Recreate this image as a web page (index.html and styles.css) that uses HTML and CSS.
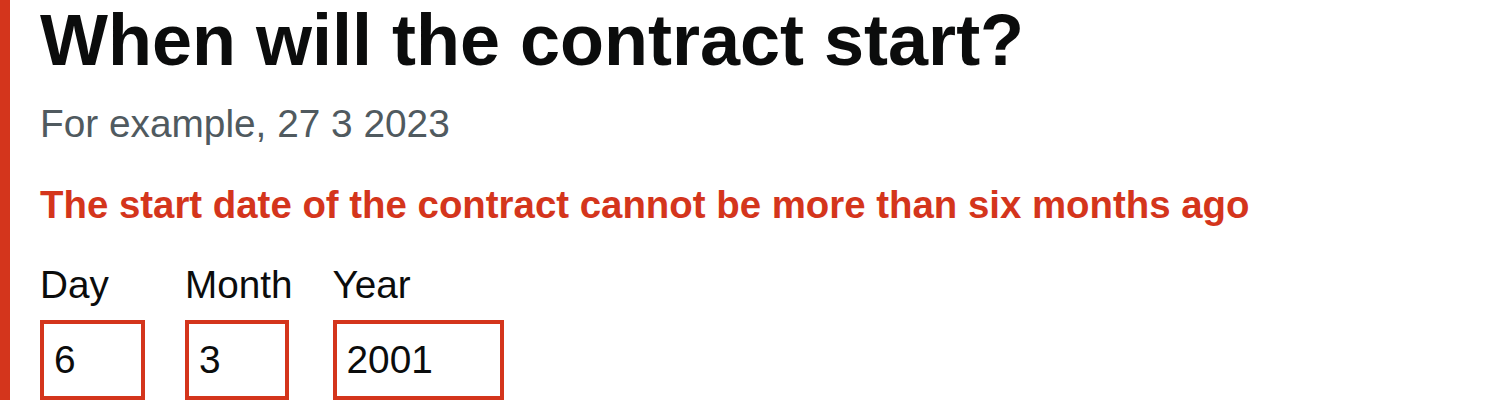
FILE: index.html
```html
<!DOCTYPE html>
<html lang="en">
<head>
<meta charset="utf-8">
<title>Contract start date</title>
<link rel="stylesheet" href="styles.css">
</head>
<body>
<div class="form-group">
  <fieldset class="fieldset">
    <legend class="legend"><h1 class="heading">When will the contract start?</h1></legend>
    <div class="hint">For example, 27 3 2023</div>
    <p class="error">The start date of the contract cannot be more than six months ago</p>
    <div class="date-input">
      <div class="item">
        <label class="label" for="d">Day</label>
        <input class="input w-day" id="d" type="text" value="6">
      </div>
      <div class="item">
        <label class="label" for="m">Month</label>
        <input class="input w-month" id="m" type="text" value="3">
      </div>
      <div class="item">
        <label class="label" for="y">Year</label>
        <input class="input w-year" id="y" type="text" value="2001">
      </div>
    </div>
  </fieldset>
</div>
</body>
</html>
```
FILE: styles.css
```css
html, body {
  margin: 0;
  padding: 0;
  background: #ffffff;
  overflow: hidden;
}
body {
  font-family: "Liberation Sans", Arial, sans-serif;
  color: #0b0c0c;
}
.form-group {
  border-left: 10px solid #d4351c;
  padding-left: 30px;
  min-height: 400px;
}
.fieldset {
  margin: 0;
  padding: 0;
  border: 0;
  min-width: 0;
}
.legend {
  padding: 0;
}
.heading {
  margin: 0;
  font-size: 72px;
  line-height: 80px;
  font-weight: 700;
}
.hint {
  margin-top: 19px;
  font-size: 38.8px;
  line-height: 50px;
  color: #505a5f;
}
.error {
  margin: 31px 0 0;
  font-size: 38.4px;
  line-height: 50px;
  font-weight: 700;
  color: #d4351c;
}
.date-input {
  display: flex;
  margin-top: 30px;
}
.item {
  display: flex;
  flex-direction: column;
  align-items: flex-start;
  margin-right: 40px;
}
.label {
  font-size: 38.7px;
  line-height: 50px;
  margin-bottom: 10px;
}
.input {
  box-sizing: border-box;
  height: 80px;
  margin: 0;
  padding: 10px;
  border: 4px solid #d4351c;
  border-radius: 0;
  font-family: "Liberation Sans", Arial, sans-serif;
  font-size: 38.8px;
  color: #0b0c0c;
  background: #ffffff;
  outline: none;
}
.w-day { width: 105px; }
.w-month { width: 104px; }
.w-year { width: 171px; }
```
